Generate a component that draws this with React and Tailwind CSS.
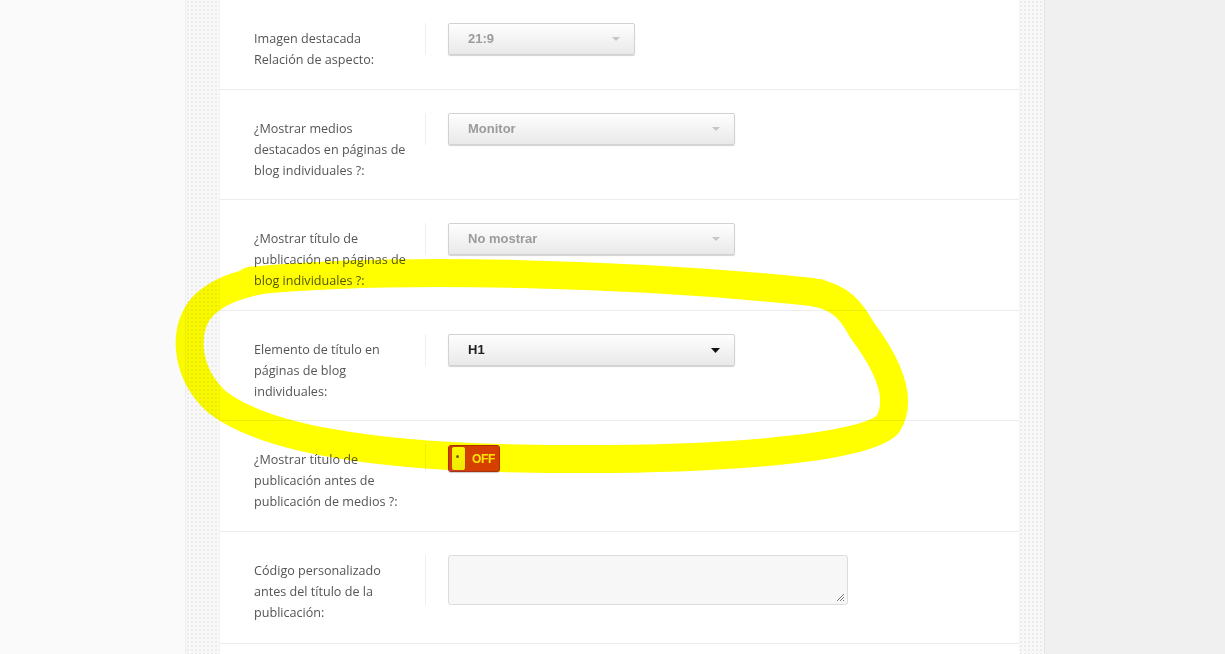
import React from "react";

const pattern =
  "bg-[#f8f8f8] bg-[radial-gradient(#ebebeb_1px,transparent_1.2px)] bg-[length:4px_4px]";

function Select({ value, width, active }) {
  return (
    <div
      className={`flex h-[32px] items-center justify-between rounded-[2px] border border-[#d2d2d2] bg-gradient-to-b from-[#fefefe] to-[#e9e9e9] pl-[19px] pr-[14px] shadow-[0_1px_1px_rgba(0,0,0,0.18)] ${width}`}
      style={{ fontFamily: '"Liberation Sans", Arial, sans-serif' }}
    >
      <span
        className={`text-[13px] font-bold ${active ? "text-[#222]" : "text-[#9b9b9b]"}`}
      >
        {value}
      </span>
      {active ? (
        <svg width="9" height="5" viewBox="0 0 9 5">
          <path d="M0 0 L9 0 L4.5 5 Z" fill="#111" />
        </svg>
      ) : (
        <svg width="8" height="4" viewBox="0 0 8 4">
          <path d="M0 0 L8 0 L4 4 Z" fill="#c6c6c6" />
        </svg>
      )}
    </div>
  );
}

function Toggle() {
  return (
    <div className="flex h-[27px] w-[52px] items-center rounded-[3px] border border-[#a8301c] bg-[#d5402a] pl-[3px] shadow-[0_1px_1px_rgba(0,0,0,0.2)]">
      <div className="relative h-[23px] w-[13px] rounded-[2px] bg-gradient-to-b from-[#fbf7e6] to-[#eeebe8] shadow-[0_0_1px_rgba(0,0,0,0.4)]">
        <div className="absolute left-[4px] top-[8px] h-[3px] w-[3px] rounded-full bg-[#6b6420]" />
      </div>
      <span
        className="ml-[7px] text-[12px] font-bold tracking-[-0.3px] text-[#ffe81a]"
        style={{ fontFamily: '"Liberation Sans", Arial, sans-serif' }}
      >
        OFF
      </span>
    </div>
  );
}

function Textarea() {
  return (
    <div className="relative h-[50px] w-[400px] rounded-[3px] border border-[#dcdcdc] bg-[#f7f7f8]">
      <svg
        className="absolute bottom-[2px] right-[2px]"
        width="9"
        height="9"
        viewBox="0 0 9 9"
      >
        <path d="M8 1 L1 8 M8 4 L4 8 M8 7 L7 8" stroke="#777" strokeWidth="1" />
      </svg>
    </div>
  );
}

function Row({ lines, pb, children }) {
  return (
    <div className="flex border-b border-[#ececec]">
      <div
        className={`w-[205px] shrink-0 pl-[34px] pt-[28px] text-[12.6px] leading-[21px] text-[#555] ${pb}`}
        style={{ fontFamily: '"Open Sans", "Noto Sans", sans-serif' }}
      >
        {lines.map((l, i) => (
          <div key={i} className="whitespace-nowrap">
            {l}
          </div>
        ))}
      </div>
      <div className="mt-[23px] self-start border-l border-[#efefef] pl-[22px]">
        {children}
      </div>
    </div>
  );
}

export default function App() {
  return (
    <div className="relative flex h-[654px] w-[1225px] overflow-hidden bg-[#fafafa]">
      <div className="w-[185px] shrink-0" />
      <div className={`w-[35px] shrink-0 border-l border-[#eeeeee] ${pattern}`} />
      <div className="w-[799px] shrink-0 bg-white">
        <Row lines={["Imagen destacada", "Relación de aspecto:"]} pb="pb-[19px]">
          <Select value="21:9" width="w-[187px]" />
        </Row>
        <Row
          pb="pb-[18px]"
          lines={[
            "¿Mostrar medios",
            "destacados en páginas de",
            "blog individuales ?:",
          ]}
        >
          <Select value="Monitor" width="w-[287px]" />
        </Row>
        <Row
          pb="pb-[19px]"
          lines={[
            "¿Mostrar título de",
            "publicación en páginas de",
            "blog individuales ?:",
          ]}
        >
          <Select value="No mostrar" width="w-[287px]" />
        </Row>
        <Row
          pb="pb-[18px]"
          lines={["Elemento de título en", "páginas de blog", "individuales:"]}
        >
          <Select value="H1" width="w-[287px]" active />
        </Row>
        <Row
          pb="pb-[19px]"
          lines={[
            "¿Mostrar título de",
            "publicación antes de",
            "publicación de medios ?:",
          ]}
        >
          <div className="pt-px">
            <Toggle />
          </div>
        </Row>
        <Row
          pb="pb-[20px]"
          lines={[
            "Código personalizado",
            "antes del título de la",
            "publicación:",
          ]}
        >
          <Textarea />
        </Row>
      </div>
      <div className={`w-[25px] shrink-0 ${pattern}`} />
      <div className="w-px shrink-0 bg-[#e4e4e4]" />
      <div className="flex-1 bg-[#f0f0f0]" />

      <svg
        className="pointer-events-none absolute inset-0 mix-blend-multiply"
        width="1225"
        height="654"
        viewBox="0 0 1225 654"
      >
        <path
          d="M250 281 C 400 266, 640 274, 812 292 C 842 297, 852 312, 862 330 C 886 362, 904 398, 888 424 C 866 450, 700 463, 500 458 C 380 455, 266 440, 217 402 C 184 372, 182 326, 205 304 C 219 292, 235 285, 262 280"
          fill="none"
          stroke="#ffff00"
          strokeWidth="28"
          strokeLinecap="round"
          strokeLinejoin="round"
        />
        <path d="M804 281 L822 279 L850 296 L856 312 L820 300 Z" fill="#ffff00" />
      </svg>
    </div>
  );
}
